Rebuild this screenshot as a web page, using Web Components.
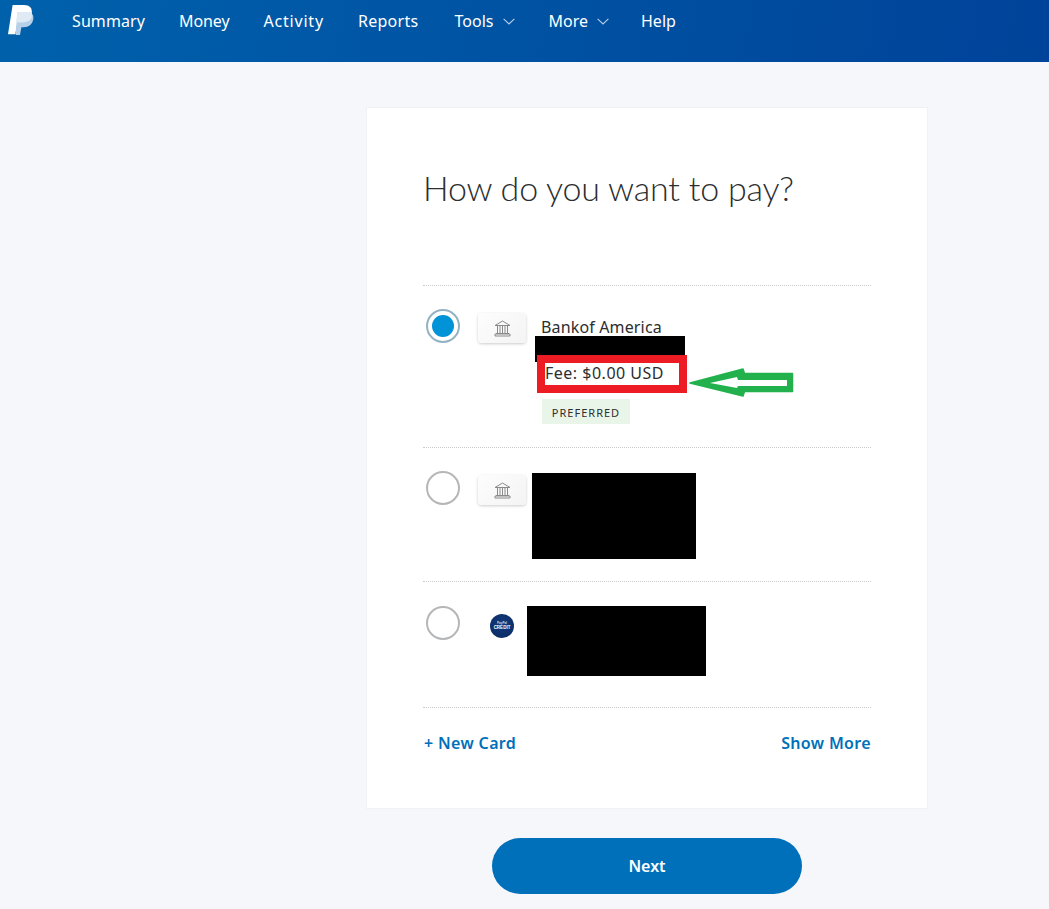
<!DOCTYPE html>
<html lang="en">
<head>
<meta charset="utf-8">
<title>How do you want to pay?</title>
<style>
    html, body { margin: 0; background: #f5f7fa; }
    body { font-family: "Noto Sans", sans-serif; color: #2c2e2f; height: 909px; overflow: hidden; }
</style>
</head>
<body>
<pp-nav></pp-nav>
<pp-page>
    <pp-card>
        <pp-row selected kind="bank" height="162">
            <pp-bank-details></pp-bank-details>
        </pp-row>
        <pp-row kind="bank" height="134">
            <pp-redact style="--w:164px;--h:86px;--ml:-5px;--mt:2px"></pp-redact>
        </pp-row>
        <pp-row kind="credit" height="126" top="24">
            <pp-redact style="--w:179px;--h:70px;--ml:-10px;--mt:0px"></pp-redact>
        </pp-row>
    </pp-card>
    <pp-button>Next</pp-button>
</pp-page>

<script>
// Top navigation bar
class PpNav extends HTMLElement {
    constructor() {
        super();
        this.attachShadow({ mode: 'open' });
    }

    connectedCallback() {
        const chevron = `<svg width="12" height="7" viewBox="0 0 12 7" fill="none" stroke="#b9cfe8" stroke-width="1.1"><path d="M.6.8 6 6 11.4.8"/></svg>`;
        this.shadowRoot.innerHTML = `
            <style>
                :host {
                    display: flex;
                    height: 62px;
                    padding-left: 8px;
                    box-sizing: border-box;
                    background: linear-gradient(100deg, #0061ab, #00439a);
                    color: #fff;
                    font-size: 16px;
                }
                .logo { display: block; width: 28px; height: 32px; margin-top: 5px; margin-right: 36px; }
                ul { display: flex; list-style: none; margin: 0; padding: 9px 0 0; gap: 34px; }
                li { display: flex; align-items: flex-start; gap: 9px; line-height: 24px; }
                li svg { margin-top: 9px; }
                .logo svg { margin: 0; }
                .summary { letter-spacing: .1px; }
                .money { letter-spacing: -.1px; }
                .activity { letter-spacing: .8px; }
                .reports { letter-spacing: .3px; margin-right: 2px; }
                .more { margin-right: -2px; }
            </style>
            <div class="logo">
                <svg width="28" height="32" viewBox="0 0 28 32">
                    <path fill="#fff" d="M4.600 0H16c5.600 0 8.600 3 7.700 8.200-1 5.900-5.200 9.300-10.700 9.300H9.600L7.300 29.200H0z"/>
                    <path fill="#b5d0e8" d="M9.600 7H19c4.400 0 7.200 2.800 6.300 7.200-1 5.100-4.600 8-9.400 8h-2.500l-1.400 7.800H8.800c-.9 0-1.500-.6-1.300-1.500z"/>
                    <path fill="#dfeaf4" d="M9.600 7H23.500c.6 2.100.6 3.300.2 5.400-1 3.300-5 5.100-10.700 5.100H7.900z"/>
                </svg>
            </div>
            <ul>
                <li class="summary">Summary</li>
                <li class="money">Money</li>
                <li class="activity">Activity</li>
                <li class="reports">Reports</li>
                <li>Tools ${chevron}</li>
                <li class="more">More ${chevron}</li>
                <li>Help</li>
            </ul>
        `;
    }
}

// Page column that holds the card and the button
class PpPage extends HTMLElement {
    constructor() {
        super();
        this.attachShadow({ mode: 'open' });
        this.shadowRoot.innerHTML = `
            <style>
                :host {
                    display: grid;
                    grid-template-columns: 562px;
                    justify-items: center;
                    row-gap: 29px;
                    padding: 45px 0 0 366px;
                }
            </style>
            <slot></slot>
        `;
    }
}

// White card with the heading and the payment list
class PpCard extends HTMLElement {
    constructor() {
        super();
        this.attachShadow({ mode: 'open' });
        this.shadowRoot.innerHTML = `
            <style>
                :host {
                    display: block;
                    width: 562px;
                    height: 702px;
                    box-sizing: border-box;
                    padding: 0 56px;
                    background: #fff;
                    border: 1px solid #f0f2f5;
                }
                h1 {
                    margin: 0;
                    padding-top: 56px;
                    height: 177px;
                    box-sizing: border-box;
                    font: 300 34px/48px Lato, "Noto Sans", sans-serif;
                    letter-spacing: -.2px;
                    color: #2c2e2f;
                }
                .links {
                    display: flex;
                    justify-content: space-between;
                    padding: 23px 0 0 1px;
                    font-weight: 600;
                    font-size: 16px;
                    line-height: 24px;
                    letter-spacing: .35px;
                    color: #0070ba;
                    border-top: 1px dotted #c9c9c9;
                }
            </style>
            <h1>How do you want to pay?</h1>
            <slot></slot>
            <div class="links"><span>+ New Card</span><span>Show More</span></div>
        `;
    }
}

// One payment method: radio, icon, and details in the slot
class PpRow extends HTMLElement {
    constructor() {
        super();
        this.attachShadow({ mode: 'open' });
    }

    connectedCallback() {
        const selected = this.hasAttribute('selected');
        const icon = this.getAttribute('kind') === 'credit' ? '<pp-credit-badge></pp-credit-badge>' : '<pp-bank-icon></pp-bank-icon>';
        this.shadowRoot.innerHTML = `
            <style>
                :host {
                    display: flex;
                    box-sizing: border-box;
                    height: ${this.getAttribute('height')}px;
                    padding: ${this.getAttribute('top') || 23}px 0 0 3px;
                    border-top: 1px dotted #c9c9c9;
                }
                .icon { width: 48px; margin: 4px 11px 0 18px; flex: none; display: flex; justify-content: center; align-items: flex-start; }
            </style>
            <pp-radio ${selected ? 'selected' : ''}></pp-radio>
            <div class="icon">${icon}</div>
            <slot></slot>
        `;
    }
}

class PpRadio extends HTMLElement {
    constructor() {
        super();
        this.attachShadow({ mode: 'open' });
        this.shadowRoot.innerHTML = `
            <style>
                :host {
                    display: flex;
                    align-items: center;
                    justify-content: center;
                    flex: none;
                    width: 34px;
                    height: 34px;
                    box-sizing: border-box;
                    border-radius: 50%;
                    border: 2px solid #b4b6b8;
                }
                :host([selected]) { border-color: #93b3c3; }
                i { display: none; width: 22px; height: 22px; border-radius: 50%; background: #0093d8; }
                :host([selected]) i { display: block; }
            </style>
            <i></i>
        `;
    }
}

class PpBankIcon extends HTMLElement {
    constructor() {
        super();
        this.attachShadow({ mode: 'open' });
        this.shadowRoot.innerHTML = `
            <style>
                :host {
                    display: flex;
                    align-items: center;
                    justify-content: center;
                    width: 48px;
                    height: 30px;
                    border-radius: 4px;
                    background: linear-gradient(135deg, #fdfdfd, #f4f4f4);
                    box-shadow: 0 1px 3px rgba(0, 0, 0, .2);
                }
            </style>
            <svg width="17" height="17" viewBox="0 0 17 17" fill="none" stroke="#8a8a8a" stroke-width="1">
                <path d="M1 5.500 8.500 1 16 5.500zM2 5.500h13"/>
                <path d="M3.500 6v7M6 6v7M11 6v7M13.500 6v7M8.500 6v7"/>
                <path d="M2 13.500h13M1 16h15v-2H1z"/>
            </svg>
        `;
    }
}

class PpCreditBadge extends HTMLElement {
    constructor() {
        super();
        this.attachShadow({ mode: 'open' });
        this.shadowRoot.innerHTML = `
            <style>
                :host {
                    display: flex;
                    flex-direction: column;
                    align-items: center;
                    justify-content: center;
                    width: 24px;
                    height: 24px;
                    margin-top: 4px;
                    border-radius: 50%;
                    background: radial-gradient(circle at 50% 40%, #123a7c, #0b2a60);
                    color: #fff;
                    font-family: "Liberation Sans", sans-serif;
                    font-weight: 700;
                    line-height: 5px;
                }
                .a { font-size: 3px; line-height: 3px; opacity: .8; }
                .b { font-size: 4.500px; }
            </style>
            <span class="a">PayPal</span>
            <span class="b">CREDIT</span>
        `;
    }
}

// Blacked out part of the screenshot
class PpRedact extends HTMLElement {
    constructor() {
        super();
        this.attachShadow({ mode: 'open' });
        this.shadowRoot.innerHTML = `
            <style>
                :host {
                    display: block;
                    flex: none;
                    width: var(--w);
                    height: var(--h);
                    margin-left: var(--ml, 0);
                    margin-top: var(--mt, 0);
                    background: #000;
                }
            </style>
        `;
    }
}

// First row details, with the hand-drawn red box and arrow
class PpBankDetails extends HTMLElement {
    constructor() {
        super();
        this.attachShadow({ mode: 'open' });
        this.shadowRoot.innerHTML = `
            <style>
                :host {
                    display: block;
                    position: relative;
                    font-size: 16px;
                    color: #2c2e2f;
                }
                .name { margin: 6px 0 0 4px; line-height: 24px; letter-spacing: .15px; }
                pp-redact { --w: 150px; --h: 26px; --ml: -2px; --mt: -3px; }
                .fee {
                    position: relative;
                    box-sizing: border-box;
                    width: 150px;
                    height: 38px;
                    margin-top: -7px;
                    border: 8px solid #ed1c24;
                    background: #fff;
                    line-height: 21px;
                    letter-spacing: .5px;
                    white-space: nowrap;
                }
                .tag {
                    display: inline-block;
                    margin: 6px 0 0 5px;
                    width: 88px;
                    height: 25px;
                    line-height: 28px;
                    text-align: center;
                    background: #eaf5ea;
                    font-size: 11px;
                    letter-spacing: 1px;
                }
                .arrow { position: absolute; left: 152px; top: 59px; }
            </style>
            <div class="name">Bankof America</div>
            <pp-redact></pp-redact>
            <div class="fee">Fee: $0.00 USD</div>
            <div class="tag">PREFERRED</div>
            <svg class="arrow" width="106" height="30" viewBox="689 368 106 30">
                <path fill="#22b14c" stroke="#22b14c" stroke-width="1.500" stroke-linejoin="round" d="M690 383 743 369l1.500 4.500h48v18h-48l-1.500 4.500z"/>
                <path fill="#fff" d="M710 383 737 377l1 3h49v6h-49l-1 2z"/>
            </svg>
        `;
    }
}

// Main action button
class PpButton extends HTMLElement {
    constructor() {
        super();
        this.attachShadow({ mode: 'open' });
        this.shadowRoot.innerHTML = `
            <style>
                :host {
                    display: flex;
                    align-items: center;
                    justify-content: center;
                    width: 310px;
                    height: 56px;
                    border-radius: 28px;
                    background: #0070ba;
                    color: #fff;
                    font-size: 16px;
                    font-weight: 600;
                }
            </style>
            <slot></slot>
        `;
    }
}

customElements.define('pp-nav', PpNav);
customElements.define('pp-page', PpPage);
customElements.define('pp-card', PpCard);
customElements.define('pp-row', PpRow);
customElements.define('pp-radio', PpRadio);
customElements.define('pp-bank-icon', PpBankIcon);
customElements.define('pp-credit-badge', PpCreditBadge);
customElements.define('pp-redact', PpRedact);
customElements.define('pp-bank-details', PpBankDetails);
customElements.define('pp-button', PpButton);
</script>
</body>
</html>
